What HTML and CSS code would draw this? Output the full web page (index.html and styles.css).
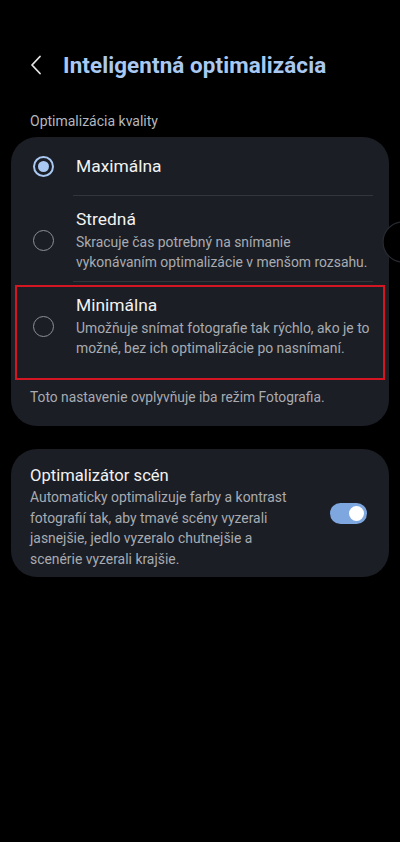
FILE: index.html
```html
<!DOCTYPE html>
<html lang="sk">
<head>
<meta charset="utf-8">
<link rel="stylesheet" href="styles.css">
</head>
<body>
<div class="screen">
  <header class="header">
    <svg class="back" width="14" height="20" viewBox="0 0 14 20"><path d="M11 1.5 L3 10 L11 18.5" fill="none" stroke="#e6e6e6" stroke-width="1.8" stroke-linecap="round" stroke-linejoin="round"/></svg>
    <h1 class="title">Inteligentná optimalizácia</h1>
  </header>

  <div class="section-label">Optimalizácia kvality</div>

  <section class="card card-quality">
    <div class="option option-max">
      <span class="radio checked"><span class="dot"></span></span>
      <div class="opt-text">
        <div class="opt-title">Maximálna</div>
      </div>
    </div>
    <div class="divider"></div>
    <div class="option">
      <span class="radio"></span>
      <div class="opt-text">
        <div class="opt-title">Stredná</div>
        <div class="opt-desc">Skracuje čas potrebný na snímanie vykonávaním optimalizácie v menšom rozsahu.</div>
      </div>
    </div>
    <div class="divider"></div>
    <div class="option option-min">
      <span class="radio"></span>
      <div class="opt-text">
        <div class="opt-title">Minimálna</div>
        <div class="opt-desc">Umožňuje snímat fotografie tak rýchlo, ako je to možné, bez ich optimalizácie po nasnímaní.</div>
      </div>
      <span class="highlight"></span>
    </div>
    <div class="note">Toto nastavenie ovplyvňuje iba režim Fotografia.</div>
  </section>

  <section class="card card-scene">
    <div class="scene-text">
      <div class="opt-title scene-title">Optimalizátor scén</div>
      <div class="opt-desc">Automaticky optimalizuje farby a kontrast fotografií tak, aby tmavé scény vyzerali jasnejšie, jedlo vyzeralo chutnejšie a scenérie vyzerali krajšie.</div>
    </div>
    <span class="toggle"><span class="thumb"></span></span>
  </section>

  <svg class="edge-handle" width="18" height="44" viewBox="0 0 18 44"><circle cx="21" cy="22" r="20" fill="#000" stroke="#272a30" stroke-width="1.3"/></svg>
</div>
</body>
</html>
```

FILE: styles.css
```css
html, body {
  margin: 0;
  padding: 0;
  background: #000;
}
body {
  font-family: Roboto, "Noto Sans", sans-serif;
  color: #f2f2f2;
  width: 400px;
  height: 842px;
  overflow: hidden;
}
.screen {
  position: relative;
  height: 842px;
  overflow: hidden;
}
.header {
  display: flex;
  align-items: center;
  height: 30px;
  padding: 50px 0 0 29px;
}
.back {
  display: block;
  margin-right: 20px;
}
.title {
  margin: 0;
  font-size: 22.4px;
  font-weight: 700;
  color: #a9c8f2;
  letter-spacing: 0.1px;
}
.section-label {
  margin: 32px 0 0 30px;
  font-size: 14px;
  line-height: 18px;
  color: #b4b7bd;
}
.card {
  background: #1b1e25;
  border-radius: 26px;
  margin: 0 11px;
}
.card-quality {
  margin-top: 7px;
  padding: 0 0 20px;
}
.option {
  position: relative;
  display: flex;
  align-items: center;
  padding: 12px 16px 9px 22px;
}
.option-max {
  height: 58px;
  padding-top: 0;
  padding-bottom: 0;
}
.option-min {
  padding-top: 12px;
  padding-bottom: 12px;
}
.radio {
  flex: none;
  box-sizing: border-box;
  width: 21px;
  height: 21px;
  border-radius: 50%;
  border: 1.6px solid #8d9096;
  margin-right: 22px;
  display: flex;
  align-items: center;
  justify-content: center;
}
.radio.checked {
  border: 2px solid #a9c8f2;
}
.radio .dot {
  width: 11px;
  height: 11px;
  border-radius: 50%;
  background: #a9c8f2;
}
.opt-text {
  flex: 1;
}
.opt-title {
  font-size: 17.4px;
  line-height: 22px;
  color: #f2f2f2;
}
.opt-desc {
  margin-top: 2px;
  font-size: 13.9px;
  line-height: 20px;
  color: #a8abb1;
}
.divider {
  height: 1px;
  background: #32353c;
  margin: 0 16px 0 62px;
}
.highlight {
  position: absolute;
  left: 4px;
  right: 4px;
  top: 3px;
  bottom: -10px;
  border: 2px solid #d41622;
  pointer-events: none;
}
.note {
  padding: 18px 0 0 19px;
  font-size: 13.8px;
  line-height: 18px;
  color: #a8abb1;
}
.card-scene {
  margin-top: 23px;
  display: flex;
  align-items: center;
  padding: 16px 22px 8px 19px;
  height: 104px;
}
.scene-text {
  flex: 1;
  padding-right: 30px;
}
.scene-title {
  font-size: 16.6px;
}
.card-scene .opt-desc {
  margin-top: 0;
  line-height: 20.5px;
}
.toggle {
  flex: none;
  position: relative;
  width: 37px;
  height: 21px;
  border-radius: 11px;
  background: #7ea6df;
  margin-top: -8px;
}
.toggle .thumb {
  position: absolute;
  right: 3px;
  top: 3px;
  width: 15px;
  height: 15px;
  border-radius: 50%;
  background: #fff;
}
.edge-handle {
  position: absolute;
  left: 382px;
  top: 220px;
  display: block;
}
```
